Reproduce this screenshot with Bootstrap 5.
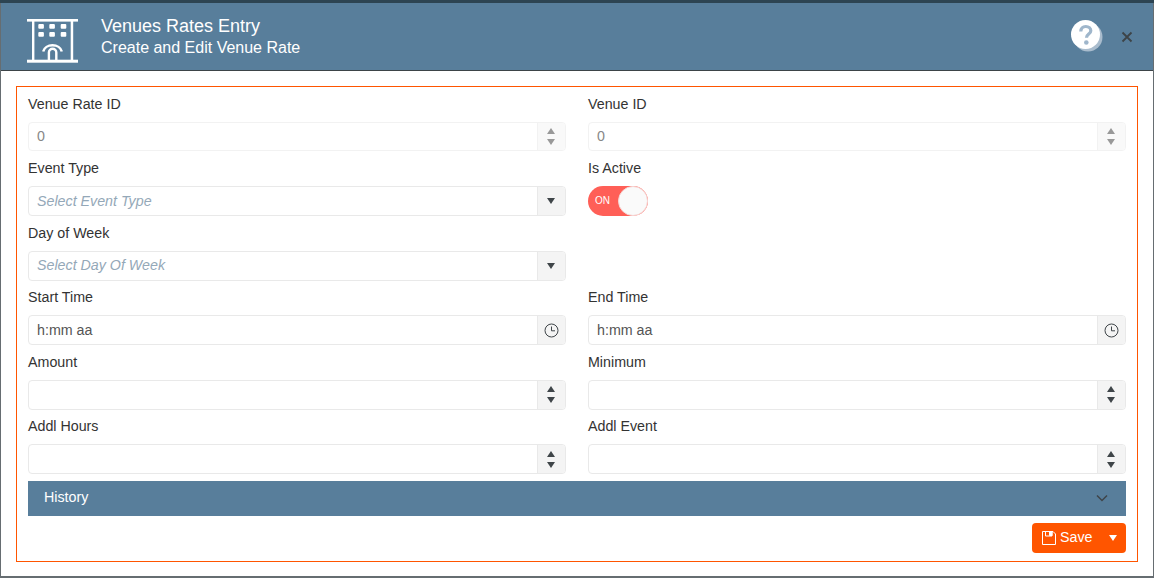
<!DOCTYPE html>
<html lang="en">
<head>
<meta charset="utf-8">
<title>Venues Rates Entry</title>
<link href="https://cdn.jsdelivr.net/npm/bootstrap@5.3.0/dist/css/bootstrap.min.css" rel="stylesheet">
<style>
html,body{height:100%;}
body{background:#666d71;font-family:"Liberation Sans",Arial,sans-serif;font-size:14.25px;color:#333;overflow:hidden;}
.backdrop-top{height:3px;background:#2d4452;}
.shell{margin:0 1px;height:573px;background:#fff;}
.shell-head{height:68px;background:#587e9b;border-bottom:1px solid #3d4448;color:#fff;padding:0 20px 0 26px;}
.head-logo{margin-top:8px;flex:none;}
.head-title{font-size:18px;line-height:21px;}
.head-sub{font-size:16px;line-height:21px;}
.head-text{margin-left:23px;}
.shell-x{color:#3d4448;margin-left:17px;}
.help-wrap{margin-top:-1px;}
.frame{margin:15px 15px 0 15px;height:476px;border:1px solid #ff5500;padding:7px 11px 0;}
.field-grid{display:grid;grid-template-columns:538px 538px;column-gap:22px;}
.fld{height:64.5px;}
.fld-label{height:27.5px;line-height:19px;color:#333;margin:0;display:block;}
.fld:nth-child(4n+1) .fld-label,.fld:nth-child(4n+2) .fld-label{line-height:20px;}
.box{height:30px;border:1px solid #e9e9e9;border-radius:4px;display:flex;background:#fff;overflow:hidden;}
.box-in{flex:1;padding:0 8px;line-height:28px;color:#555;min-width:0;}
.box-in.off{color:#888;line-height:27.5px;}
.box-in.ph{color:#94a8b8;font-style:italic;}
.fld:nth-child(5) .box-in.ph{line-height:27px;}
.box-btn{width:28px;flex:none;background:#f4f4f4;border-left:1px solid #e9e9e9;padding-right:1px;display:flex;flex-direction:column;align-items:center;justify-content:center;gap:5px;}
.off-box{height:29.5px;border-color:#f2f2f2;}
.off-box .box-btn{background:#f9f9f9;border-color:#f2f2f2;}
.tri-up,.tri-dn{width:0;height:0;border-left:4.5px solid transparent;border-right:4.5px solid transparent;}
.tri-up{border-bottom:6px solid #3f4549;}
.tri-dn{border-top:6px solid #3f4549;}
.off-box .tri-up{border-bottom-color:#999;}
.off-box .tri-dn{border-top-color:#999;}
.tog{width:60px;height:30px;border-radius:15px;background:#ff5f57;position:relative;color:#fff;font-size:10px;line-height:29px;padding-left:7px;}
.tog-knob{position:absolute;right:0;top:0;width:30px;height:30px;border-radius:50%;background:#fafafa;border:1px solid #f5d8d6;}
.hist{height:35px;margin-top:-.5px;background:#587e9b;color:#fff;padding:0 18px 0 16px;}
.foot{margin-top:7px;}
.save{width:94px;height:30px;background:#ff5500;border-radius:4px;color:#fff;padding:0 9px 0 10px;}
.save-label{margin-left:4px;}
.save-caret{margin-left:auto;width:0;height:0;border-left:4.5px solid transparent;border-right:4.5px solid transparent;border-top:6px solid #fff;}
</style>
</head>
<body>
<div class="backdrop-top"></div>
<div class="shell">
  <div class="shell-head d-flex align-items-center">
    <svg class="head-logo" width="51" height="45" viewBox="0 0 51 45" fill="#fff" aria-hidden="true">
      <rect x="0" y="1" width="51" height="2.600"/>
      <rect x="5" y="1" width="2.400" height="42"/><rect x="43.700" y="1" width="2.500" height="42"/>
      <rect x="0" y="41.700" width="51" height="3"/>
      <rect x="11.300" y="6" width="5.600" height="4.800" rx="1"/><rect x="22.300" y="6" width="5.600" height="4.800" rx="1"/><rect x="33.700" y="6" width="5.600" height="4.800" rx="1"/>
      <rect x="11.300" y="14" width="5.600" height="4.800" rx="1"/><rect x="22.300" y="14" width="5.600" height="4.800" rx="1"/><rect x="33.700" y="14" width="5.600" height="4.800" rx="1"/>
      <path d="M16.200 33.500a9.500 7.800 0 0 1 18.600 0" fill="none" stroke="#fff" stroke-width="2.500"/>
      <path d="M21.900 42v-7.500a3.700 3.700 0 0 1 7.400 0v7.500" fill="none" stroke="#fff" stroke-width="2.400"/>
    </svg>
    <div class="head-text">
      <div class="head-title">Venues Rates Entry</div>
      <div class="head-sub">Create and Edit Venue Rate</div>
    </div>
    <div class="ms-auto d-flex align-items-center">
      <svg class="help-wrap" width="34" height="34" viewBox="0 0 34 34" aria-hidden="true">
        <circle cx="18" cy="18" r="14.500" fill="#a9bccd"/>
        <circle cx="15.500" cy="15.500" r="14.500" fill="#fff"/>
        <path d="M10.800 12.500c.2-3.300 2.300-5 5-5 3 0 5 1.800 5 4.200 0 3.400-4.300 3.300-4.300 7" fill="none" stroke="#9fb6cb" stroke-width="3.200"/>
        <circle cx="16.300" cy="23.500" r="2.300" fill="#9fb6cb"/>
      </svg>
      <svg class="shell-x" width="12" height="12" viewBox="0 0 12 12" aria-hidden="true"><path d="M1.500 1.500l9 9M10.500 1.500l-9 9" stroke="currentColor" stroke-width="1.800"/></svg>
    </div>
  </div>
  <div class="frame">
    <div class="field-grid">
      <div class="fld"><label class="fld-label">Venue Rate ID</label><div class="box off-box"><div class="box-in off">0</div><div class="box-btn"><span class="tri-up"></span><span class="tri-dn"></span></div></div></div>
      <div class="fld"><label class="fld-label">Venue ID</label><div class="box off-box"><div class="box-in off">0</div><div class="box-btn"><span class="tri-up"></span><span class="tri-dn"></span></div></div></div>
      <div class="fld"><label class="fld-label">Event Type</label><div class="box"><div class="box-in ph">Select Event Type</div><div class="box-btn"><span class="tri-dn"></span></div></div></div>
      <div class="fld"><label class="fld-label">Is Active</label><div class="tog">ON<span class="tog-knob"></span></div></div>
      <div class="fld"><label class="fld-label">Day of Week</label><div class="box"><div class="box-in ph">Select Day Of Week</div><div class="box-btn"><span class="tri-dn"></span></div></div></div>
      <div class="fld"></div>
      <div class="fld"><label class="fld-label">Start Time</label><div class="box"><div class="box-in">h:mm aa</div><div class="box-btn"><svg width="15" height="15" viewBox="0 0 15 15" fill="none" stroke="#3f4549" aria-hidden="true"><circle cx="7.500" cy="7.500" r="6.500"/><path d="M7.500 3.500v4.300h3.500"/></svg></div></div></div>
      <div class="fld"><label class="fld-label">End Time</label><div class="box"><div class="box-in">h:mm aa</div><div class="box-btn"><svg width="15" height="15" viewBox="0 0 15 15" fill="none" stroke="#3f4549" aria-hidden="true"><circle cx="7.500" cy="7.500" r="6.500"/><path d="M7.500 3.500v4.300h3.500"/></svg></div></div></div>
      <div class="fld"><label class="fld-label">Amount</label><div class="box"><div class="box-in"></div><div class="box-btn"><span class="tri-up"></span><span class="tri-dn"></span></div></div></div>
      <div class="fld"><label class="fld-label">Minimum</label><div class="box"><div class="box-in"></div><div class="box-btn"><span class="tri-up"></span><span class="tri-dn"></span></div></div></div>
      <div class="fld"><label class="fld-label">Addl Hours</label><div class="box"><div class="box-in"></div><div class="box-btn"><span class="tri-up"></span><span class="tri-dn"></span></div></div></div>
      <div class="fld"><label class="fld-label">Addl Event</label><div class="box"><div class="box-in"></div><div class="box-btn"><span class="tri-up"></span><span class="tri-dn"></span></div></div></div>
    </div>
    <div class="hist d-flex align-items-center justify-content-between">
      <span>History</span>
      <svg width="12" height="8" viewBox="0 0 12 8" fill="none" stroke="#3f4549" stroke-width="1.500" aria-hidden="true"><path d="M1 1.500l5 5 5-5"/></svg>
    </div>
    <div class="foot d-flex justify-content-end">
      <div class="save d-flex align-items-center">
        <svg width="14" height="14" viewBox="0 0 14 14" fill="none" stroke="#fff" aria-hidden="true"><path d="M.5.500h10.500l2.500 2.500v10.500h-13z"/><path d="M3.500.500v4.500h6.500v-4.500"/><path d="M7.500.500h2.500v4h-2.500z" fill="#fff"/></svg>
        <span class="save-label">Save</span>
        <span class="save-caret"></span>
      </div>
    </div>
  </div>
</div>
<script src="https://cdn.jsdelivr.net/npm/bootstrap@5.3.0/dist/js/bootstrap.bundle.min.js"></script>
</body>
</html>
